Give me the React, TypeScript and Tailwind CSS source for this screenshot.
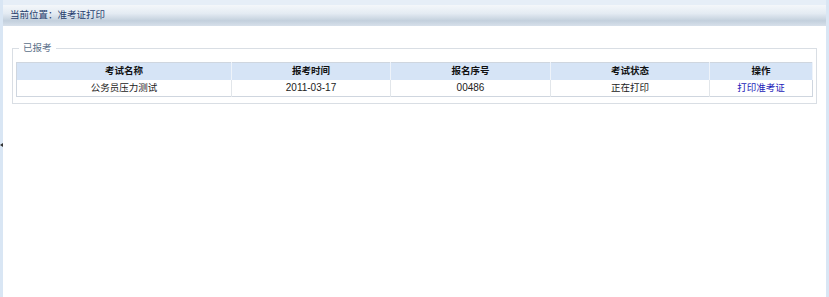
export default function App() {
  const cols = [
    { label: '考试名称', w: 'w-[215px]' },
    { label: '报考时间', w: 'w-[159px]' },
    { label: '报名序号', w: 'w-[160px]' },
    { label: '考试状态', w: 'w-[159px]' },
    { label: '操作', w: '' },
  ];

  return (
    <div className="relative w-[829px] h-[297px] bg-white border-l-[3px] border-r-[3px] border-[#d9e6f4] text-[9.5px] text-[#222] font-['Liberation_Sans','Noto_Sans_CJK_SC',sans-serif]">
      {/* collapse handle on the left edge */}
      <div className="absolute left-[-3px] top-[143px] w-0 h-0 border-y-[2px] border-y-transparent border-r-[3px] border-r-[#333]" />

      <div className="h-[5px] bg-[#e6eef7]" />
      {/* breadcrumb bar */}
      <div className="h-[21px] flex items-center pl-[7px] text-[#1f3c6c] bg-[linear-gradient(#f4f7fa_0%,#e4ebf3_40%,#c3d0dd_75%,#d7e0ea_100%)]">
        当前位置：准考证打印
      </div>

      <div className="px-[9px] pt-[14px]">
        <fieldset className="border border-[#d9dee4] px-[3px] pb-[6px]">
          <legend className="ml-[3px] px-[4px] text-[#5b6f89] leading-[16px]">已报考</legend>
          <table className="w-full mt-[6px] border-collapse border border-[#cfd6df]">
            <thead>
              <tr className="bg-[#d6e4f6] h-[17px]">
                {cols.map(c => (
                  <th key={c.label} className={`${c.w} border-r border-[#eef3fa] font-bold text-[#111] text-center`}>
                    {c.label}
                  </th>
                ))}
              </tr>
            </thead>
            <tbody>
              <tr className="h-[17px]">
                <td className="border-r border-[#e2e6ea] text-center">公务员压力测试</td>
                <td className="border-r border-[#e2e6ea] text-center text-[10px]">2011-03-17</td>
                <td className="border-r border-[#e2e6ea] text-center text-[10px]">00486</td>
                <td className="border-r border-[#e2e6ea] text-center">正在打印</td>
                <td className="text-center text-[#1a1ab8]">打印准考证</td>
              </tr>
            </tbody>
          </table>
        </fieldset>
      </div>
    </div>
  );
}
